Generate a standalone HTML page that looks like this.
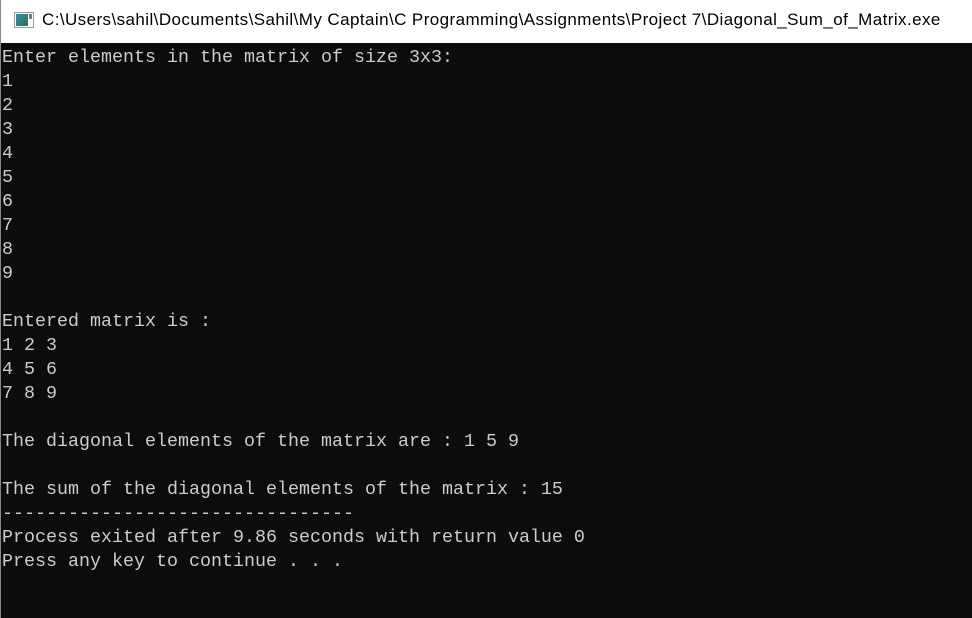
<!DOCTYPE html>
<html><head><style>
html,body{margin:0;padding:0;width:972px;height:618px;overflow:hidden;background:#fff}
.title{position:absolute;left:0;top:0;width:972px;height:43px;background:#fff;border-left:1px solid #888;box-sizing:border-box}
.title span{position:absolute;left:41px;top:10px;font:17px "Liberation Sans",sans-serif;color:#000;white-space:nowrap;letter-spacing:0.42px}
.icon{position:absolute;left:13px;top:12px;width:20px;height:16px;border:1px solid #999;box-sizing:border-box;background:#fff}
.icon i{position:absolute;left:1px;top:1px;width:12px;height:12px;background:linear-gradient(135deg,#3a8fa8,#2c6e5a)}
.icon b{position:absolute;left:14px;top:1px;width:3px;height:5px;background:#777}
.con{position:absolute;left:0;top:43px;width:972px;height:575px;background:#0c0c0c;border-left:1px solid #888;box-sizing:border-box}
pre{margin:0;position:absolute;left:1px;top:3px;font:18.33px/24px "Liberation Mono",monospace;color:#cccccc}
</style></head><body>
<div class="title"><div class="icon"><i></i><b></b></div><span>C:\Users\sahil\Documents\Sahil\My Captain\C Programming\Assignments\Project 7\Diagonal_Sum_of_Matrix.exe</span></div>
<div class="con"><pre>Enter elements in the matrix of size 3x3:
1
2
3
4
5
6
7
8
9

Entered matrix is :
1 2 3
4 5 6
7 8 9

The diagonal elements of the matrix are : 1 5 9

The sum of the diagonal elements of the matrix : 15
--------------------------------
Process exited after 9.86 seconds with return value 0
Press any key to continue . . .</pre></div>
</body></html>
